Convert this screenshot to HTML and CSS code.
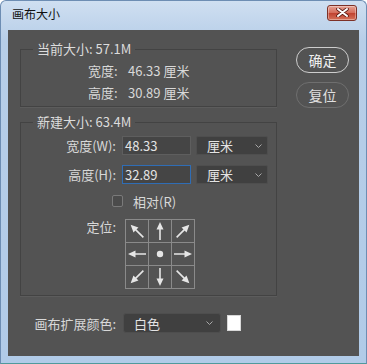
FILE: index.html
```html
<!DOCTYPE html>
<html lang="zh-CN">
<head>
    <meta charset="UTF-8">
    <title>画布大小</title>
    <link rel="stylesheet" href="styles.css">
</head>
<body>

    <svg class="defs" width="0" height="0">
        <symbol id="arrow" viewBox="0 0 22 22">
            <line x1="11" y1="9" x2="11" y2="20" stroke="#e6e6e6" stroke-width="1.6"/>
            <polygon points="11,2 7.5,9.5 14.5,9.5" fill="#e6e6e6"/>
        </symbol>
    </svg>

    <div class="window">
        <!-- Title bar -->
        <div class="title-bar">
            <span class="title">画布大小</span>
            <button class="close-button">
                <svg width="13" height="9" viewBox="0 0 13 9">
                    <path d="M2 1 L11 8 M11 1 L2 8" stroke="#5a1c14" stroke-width="3.6" stroke-linecap="round"/>
                    <path d="M2 1 L11 8 M11 1 L2 8" stroke="#fff" stroke-width="2" stroke-linecap="round"/>
                </svg>
            </button>
        </div>

        <div class="panel">
            <div class="left-column">
                <!-- Current size -->
                <fieldset class="group current">
                    <legend>当前大小: 57.1M</legend>
                    <div class="info">
                        <div class="info-row"><span>宽度:</span><span>46.33 厘米</span></div>
                        <div class="info-row"><span>高度:</span><span>30.89 厘米</span></div>
                    </div>
                </fieldset>

                <!-- New size -->
                <fieldset class="group new-size">
                    <legend>新建大小: 63.4M</legend>
                    <div class="field-row">
                        <label>宽度(W):</label>
                        <div class="text-input">48.33</div>
                        <div class="select">厘米<svg class="chevron" width="7" height="4" viewBox="0 0 7 4"><path d="M0.5 0.5 L3.5 3.5 L6.5 0.5" fill="none" stroke="#a8a8a8"/></svg></div>
                    </div>
                    <div class="field-row">
                        <label>高度(H):</label>
                        <div class="text-input focused">32.89</div>
                        <div class="select">厘米<svg class="chevron" width="7" height="4" viewBox="0 0 7 4"><path d="M0.5 0.5 L3.5 3.5 L6.5 0.5" fill="none" stroke="#a8a8a8"/></svg></div>
                    </div>
                    <div class="check-row">
                        <span class="checkbox"></span>
                        <span>相对(R)</span>
                    </div>
                    <div class="anchor-row">
                        <label>定位:</label>
                        <div class="anchor-grid">
                            <div class="cell"><svg class="nw" width="22" height="22"><use href="#arrow"/></svg></div>
                            <div class="cell"><svg width="22" height="22"><use href="#arrow"/></svg></div>
                            <div class="cell"><svg class="ne" width="22" height="22"><use href="#arrow"/></svg></div>
                            <div class="cell"><svg class="w" width="22" height="22"><use href="#arrow"/></svg></div>
                            <div class="cell"><svg width="22" height="22"><circle cx="11" cy="11" r="3.2" fill="#e6e6e6"/></svg></div>
                            <div class="cell"><svg class="e" width="22" height="22"><use href="#arrow"/></svg></div>
                            <div class="cell"><svg class="sw" width="22" height="22"><use href="#arrow"/></svg></div>
                            <div class="cell"><svg class="s" width="22" height="22"><use href="#arrow"/></svg></div>
                            <div class="cell"><svg class="se" width="22" height="22"><use href="#arrow"/></svg></div>
                        </div>
                    </div>
                </fieldset>

                <!-- Extension colour -->
                <div class="color-row">
                    <label>画布扩展颜色:</label>
                    <div class="select wide">白色<svg class="chevron" width="7" height="4" viewBox="0 0 7 4"><path d="M0.5 0.5 L3.5 3.5 L6.5 0.5" fill="none" stroke="#a8a8a8"/></svg></div>
                    <span class="swatch"></span>
                </div>
            </div>

            <div class="right-column">
                <button class="pill-button primary">确定</button>
                <button class="pill-button">复位</button>
            </div>
        </div>
    </div>

</body>
</html>
```

FILE: styles.css
```css
body {
    margin: 0;
    width: 367px;
    height: 364px;
    overflow: hidden;
    font-family: "Noto Sans CJK SC", "Noto Sans", sans-serif;
    font-size: 13px;
    background-color: #fff;
}

.defs {
    display: block;
    width: 0;
    height: 0;
}

.window {
    height: 364px;
    box-sizing: border-box;
    display: flex;
    flex-direction: column;
    border: 1px solid #6d8db3;
    border-bottom-color: #4f9a9c;
    border-radius: 6px 6px 0 0;
    background: linear-gradient(#cfdff1, #b7cee8 40px, #b1cbe8);
}

/* Title bar */
.title-bar {
    height: 29px;
    display: flex;
    align-items: center;
    justify-content: space-between;
    padding: 0 9px 0 11px;
}

.title {
    font-size: 12px;
    color: #111;
    margin-top: -4px;
}

.close-button {
    width: 30px;
    height: 16px;
    margin-top: -6px;
    padding: 0;
    display: flex;
    align-items: center;
    justify-content: center;
    border: 1px solid #7d3127;
    border-radius: 3px;
    background: linear-gradient(#e6a294, #d46a58 50%, #c0412f 51%, #d5725a);
    box-shadow: inset 0 0 0 1px rgba(255, 255, 255, 0.35);
}

/* Dark dialog panel */
.panel {
    flex: 1;
    margin: 0 7px 7px;
    display: flex;
    gap: 19px;
    padding: 11px 0 0 12px;
    background-color: #535353;
    color: #d8d8d8;
}

.left-column {
    width: 257px;
}

.group {
    margin: 0;
    padding: 0;
    border: 1px solid #434343;
    box-shadow: 0 1px 0 #5c5c5c;
}

.group legend {
    margin-left: 12px;
    padding: 0 4px;
    line-height: 16px;
    color: #dcdcdc;
}

.current {
    padding: 2px 0 3px 0;
}

.info {
    margin-left: 67px;
}

.info-row {
    display: flex;
    height: 22px;
    align-items: center;
}

.info-row span:first-child {
    width: 40px;
}

.new-size {
    margin-top: 7px;
    padding: 6px 0 6px 0;
}

.field-row {
    display: grid;
    grid-template-columns: 96px 69px 72px;
    column-gap: 5px;
    align-items: center;
    margin-bottom: 10px;
}

.field-row label,
.anchor-row label,
.color-row label {
    text-align: right;
    white-space: nowrap;
    padding-right: 1px;
}

.text-input {
    height: 19px;
    box-sizing: border-box;
    padding: 0 2px;
    line-height: 17px;
    background-color: #454545;
    border: 1px solid #5e5e5e;
    color: #e4e4e4;
}

.text-input.focused {
    border-color: #2f6db5;
}

.select {
    height: 19px;
    box-sizing: border-box;
    display: flex;
    align-items: center;
    justify-content: space-between;
    padding: 0 5px 0 10px;
    background-color: #404040;
    border: 1px solid #4e4e4e;
    border-radius: 2px;
    color: #e4e4e4;
}

.check-row {
    display: flex;
    align-items: center;
    gap: 10px;
    height: 14px;
    margin: 2px 0 11px 91px;
}

.checkbox {
    width: 11px;
    height: 12px;
    box-sizing: border-box;
    border: 1px solid #7a7a7a;
    border-radius: 2px;
    background-color: #4b4b4b;
}

.anchor-row {
    display: grid;
    grid-template-columns: 96px 70px;
    column-gap: 8px;
    align-items: start;
}

.anchor-row label {
    line-height: 16px;
}

.anchor-grid {
    display: grid;
    grid-template-columns: repeat(3, 22px);
    grid-template-rows: repeat(3, 22px);
    gap: 1px;
    padding: 1px;
    background-color: #8a8a8a;
}

.cell {
    background-color: #535353;
}

.cell svg {
    display: block;
}

.nw { transform: rotate(-45deg); }
.ne { transform: rotate(45deg); }
.e  { transform: rotate(90deg); }
.se { transform: rotate(135deg); }
.s  { transform: rotate(180deg); }
.sw { transform: rotate(-135deg); }
.w  { transform: rotate(-90deg); }

.color-row {
    display: grid;
    grid-template-columns: 97px 98px 14px;
    column-gap: 6px;
    align-items: center;
    margin-top: 17px;
}

.select.wide {
    height: 20px;
    border-radius: 3px;
    padding-right: 7px;
}

.swatch {
    width: 14px;
    height: 16px;
    box-sizing: border-box;
    background-color: #fff;
    border: 1px solid #d8d8d8;
}

/* Buttons */
.right-column {
    display: flex;
    flex-direction: column;
    gap: 9px;
    padding-top: 6px;
}

.pill-button {
    width: 53px;
    height: 26px;
    padding: 0;
    border: 1.5px solid #6f6f6f;
    border-radius: 13px;
    background-color: #535353;
    color: #e0e0e0;
    font-family: "Noto Sans CJK SC", sans-serif;
    font-size: 14px;
}

.pill-button.primary {
    border-color: #cdcdcd;
    color: #f0f0f0;
}
```
